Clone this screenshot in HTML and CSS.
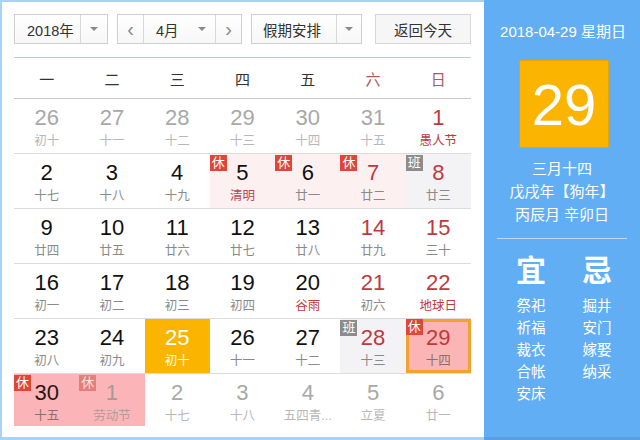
FILE: index.html
```html
<!DOCTYPE html>
<html>
<head>
<meta charset="utf-8">
<link rel="stylesheet" href="styles.css">
</head>
<body>
<div class="app">
  <div class="left">
    <div class="controls">
      <div class="sel year"><span class="val">2018年</span><span class="drop"><i class="tri"></i></span></div>
      <div class="sel month">
        <span class="nav">&#8249;</span>
        <span class="val">4月</span><span class="drop"><i class="tri"></i></span>
        <span class="nav next">&#8250;</span>
      </div>
      <div class="sel hol"><span class="val">假期安排</span><span class="drop"><i class="tri"></i></span></div>
      <div class="btn">返回今天</div>
    </div>
    <div class="cal">
      <div class="week">
        <span>一</span><span>二</span><span>三</span><span>四</span><span>五</span><span class="we">六</span><span class="we">日</span>
      </div>
      <div class="row">
        <div class="cell other"><b>26</b><small>初十</small></div>
        <div class="cell other"><b>27</b><small>十一</small></div>
        <div class="cell other"><b>28</b><small>十二</small></div>
        <div class="cell other"><b>29</b><small>十三</small></div>
        <div class="cell other"><b>30</b><small>十四</small></div>
        <div class="cell other"><b>31</b><small>十五</small></div>
        <div class="cell red"><b>1</b><small class="fest">愚人节</small></div>
      </div>
      <div class="row">
        <div class="cell"><b>2</b><small>十七</small></div>
        <div class="cell"><b>3</b><small>十八</small></div>
        <div class="cell"><b>4</b><small>十九</small></div>
        <div class="cell rest"><i class="tag">休</i><b>5</b><small class="fest2">清明</small></div>
        <div class="cell rest"><i class="tag">休</i><b>6</b><small>廿一</small></div>
        <div class="cell rest red"><i class="tag">休</i><b>7</b><small>廿二</small></div>
        <div class="cell work red"><i class="tag gray">班</i><b>8</b><small>廿三</small></div>
      </div>
      <div class="row">
        <div class="cell"><b>9</b><small>廿四</small></div>
        <div class="cell"><b>10</b><small>廿五</small></div>
        <div class="cell"><b>11</b><small>廿六</small></div>
        <div class="cell"><b>12</b><small>廿七</small></div>
        <div class="cell"><b>13</b><small>廿八</small></div>
        <div class="cell red"><b>14</b><small>廿九</small></div>
        <div class="cell red"><b>15</b><small>三十</small></div>
      </div>
      <div class="row">
        <div class="cell"><b>16</b><small>初一</small></div>
        <div class="cell"><b>17</b><small>初二</small></div>
        <div class="cell"><b>18</b><small>初三</small></div>
        <div class="cell"><b>19</b><small>初四</small></div>
        <div class="cell"><b>20</b><small class="fest">谷雨</small></div>
        <div class="cell red"><b>21</b><small>初六</small></div>
        <div class="cell red"><b>22</b><small class="fest">地球日</small></div>
      </div>
      <div class="row">
        <div class="cell"><b>23</b><small>初八</small></div>
        <div class="cell"><b>24</b><small>初九</small></div>
        <div class="cell today"><b>25</b><small>初十</small></div>
        <div class="cell"><b>26</b><small>十一</small></div>
        <div class="cell"><b>27</b><small>十二</small></div>
        <div class="cell work red"><i class="tag gray">班</i><b>28</b><small>十三</small></div>
        <div class="cell sel29 red"><i class="tag">休</i><b>29</b><small>十四</small></div>
      </div>
      <div class="row last">
        <div class="cell hot dark"><i class="tag">休</i><b>30</b><small>十五</small></div>
        <div class="cell hot other"><i class="tag faded">休</i><b>1</b><small>劳动节</small></div>
        <div class="cell other"><b>2</b><small>十七</small></div>
        <div class="cell other"><b>3</b><small>十八</small></div>
        <div class="cell other"><b>4</b><small>五四青...</small></div>
        <div class="cell other"><b>5</b><small>立夏</small></div>
        <div class="cell other"><b>6</b><small>廿一</small></div>
      </div>
    </div>
  </div>
  <div class="right">
    <div class="date">2018-04-29 星期日</div>
    <div class="big">29</div>
    <div class="lunar">
      <p>三月十四</p>
      <p>戊戌年【狗年】</p>
      <p>丙辰月 辛卯日</p>
    </div>
    <div class="sep"></div>
    <div class="yiji">
      <div class="col">
        <div class="head">宜</div>
        <p>祭祀</p><p>祈福</p><p>裁衣</p><p>合帐</p><p>安床</p>
      </div>
      <div class="col">
        <div class="head">忌</div>
        <p>掘井</p><p>安门</p><p>嫁娶</p><p>纳采</p>
      </div>
    </div>
  </div>
</div>
</body>
</html>
```

FILE: styles.css
```css
* { box-sizing: border-box; }
html, body { margin: 0; padding: 0; }
body {
  width: 640px;
  height: 440px;
  overflow: hidden;
  background: #fff;
  font-family: "Liberation Sans", "Noto Sans CJK SC", sans-serif;
}
.app {
  display: flex;
  width: 640px;
  height: 440px;
}
.left {
  width: 484px;
  height: 440px;
  border: 2px solid #a8d2f6;
  border-right: none;
  border-bottom-width: 3px;
  padding: 12px 13px 0 12px;
  background: #fff;
}
.controls {
  display: flex;
  height: 30px;
  gap: 9px;
}
.sel, .btn {
  display: flex;
  align-items: stretch;
  height: 30px;
  border: 1px solid #cfcfcf;
  background: linear-gradient(#ffffff, #f7f7f7);
  color: #333;
  font-size: 14.5px;
}
.sel .val {
  display: flex;
  align-items: center;
  padding-left: 12px;
}
.year { width: 94px; }
.year .val { width: 65px; }
.drop {
  display: flex;
  align-items: center;
  justify-content: center;
  flex: 1;
  border-left: 1px solid #d8d8d8;
}
.tri {
  width: 0;
  height: 0;
  border-left: 4px solid transparent;
  border-right: 4px solid transparent;
  border-top: 4px solid #8a8a8a;
}
.month { width: 125px; }
.month .nav {
  width: 26px;
  display: flex;
  align-items: center;
  justify-content: center;
  color: #888;
  font-size: 20px;
  border-right: 1px solid #d8d8d8;
}
.month .nav.next {
  border-right: none;
  border-left: 1px solid #d8d8d8;
}
.month .val { width: 44px; padding-left: 12px; }
.month .drop { border-left: none; }
.hol { width: 111px; }
.hol .val { width: 84px; padding-left: 11px; }
.btn {
  width: 96px;
  margin-left: 4px;
  justify-content: center;
  align-items: center;
  background: #f6f6f6;
  border-color: #d6d6d6;
}
.cal {
  margin-top: 13px;
  border-top: 1px solid #bccbd8;
}
.week {
  display: grid;
  grid-template-columns: repeat(7, 1fr);
  height: 41px;
  align-items: center;
  border-bottom: 1px solid #c8c8c8;
  text-align: center;
  color: #333;
  font-size: 15px;
}
.week .we { color: #b05a5a; }
.row {
  display: grid;
  grid-template-columns: repeat(7, 1fr);
  height: 55px;
  border-bottom: 1px solid #dcdcdc;
}
.row.last { border-bottom: none; height: 52px; }
.cell {
  position: relative;
  display: flex;
  flex-direction: column;
  align-items: center;
  padding-top: 7px;
}
.cell b {
  font-weight: normal;
  font-size: 22px;
  line-height: 24px;
  color: #111;
  font-family: "Liberation Sans", Arial, sans-serif;
}
.cell small {
  margin-top: 3px;
  font-size: 12.5px;
  line-height: 16px;
  color: #8a8a8a;
}
.cell.red b { color: #c0393f; }
.cell small.fest { color: #c0393f; }
.cell small.fest2 { color: #b4485a; }
.cell.other b { color: #a8a8a8; }
.cell.other small { color: #b8b8b8; }
.cell.rest { background: #fdf0f0; }
.cell.work { background: #f3f3f5; }
.cell.today { background: #fbb500; }
.cell.today b, .cell.today small { color: #fff; }
.cell.hot { background: #fbb5b8; }
.cell.hot.dark b { color: #2a1515; }
.cell.hot.dark small { color: #8a7070; }
.cell.hot.other b { color: #a89898; }
.cell.hot.other small { color: #b89a9a; }
.cell.sel29 {
  background: #fbb5b5;
  border: 3px solid #f0a232;
  padding-top: 4px;
}
.cell.sel29 small { color: #8a7070; }
.cell.sel29 .tag { top: -3px; left: -3px; }
.tag {
  position: absolute;
  top: 1px;
  left: 0;
  width: 17px;
  height: 16px;
  background: #e0453a;
  color: #fff;
  font-style: normal;
  font-size: 13px;
  line-height: 16px;
  text-align: center;
}
.tag.gray { background: #8c8c8c; }
.tag.faded { background: #e67e7c; color: #fbe0e0; }
.right {
  flex: 1;
  height: 440px;
  background: #62aef5;
  border-bottom: 3px solid #5aa0e0;
  display: flex;
  flex-direction: column;
  align-items: center;
  color: #fff;
}
.date {
  margin-top: 22px;
  font-size: 15px;
  line-height: 20px;
  margin-left: 2px;
}
.big {
  margin-top: 18px;
  width: 90px;
  height: 88px;
  background: #fbb500;
  border: 1px solid #e7a300;
  border-radius: 2px;
  display: flex;
  align-items: center;
  justify-content: center;
  font-size: 58px;
  color: #fff;
  margin-left: 4px;
}
.lunar {
  margin-top: 9px;
  text-align: center;
  font-size: 15px;
  line-height: 23px;
}
.lunar p { margin: 0; }
.sep {
  margin-top: 12px;
  width: 130px;
  height: 1px;
  background: #b8d9f8;
}
.yiji {
  display: flex;
  gap: 36px;
  margin-top: 14px;
  margin-left: 4px;
}
.col {
  display: flex;
  flex-direction: column;
  align-items: center;
}
.head {
  font-size: 30px;
  line-height: 36px;
  font-weight: bold;
  margin-bottom: 6px;
}
.col p {
  margin: 0;
  font-size: 14.5px;
  line-height: 22px;
}
```
